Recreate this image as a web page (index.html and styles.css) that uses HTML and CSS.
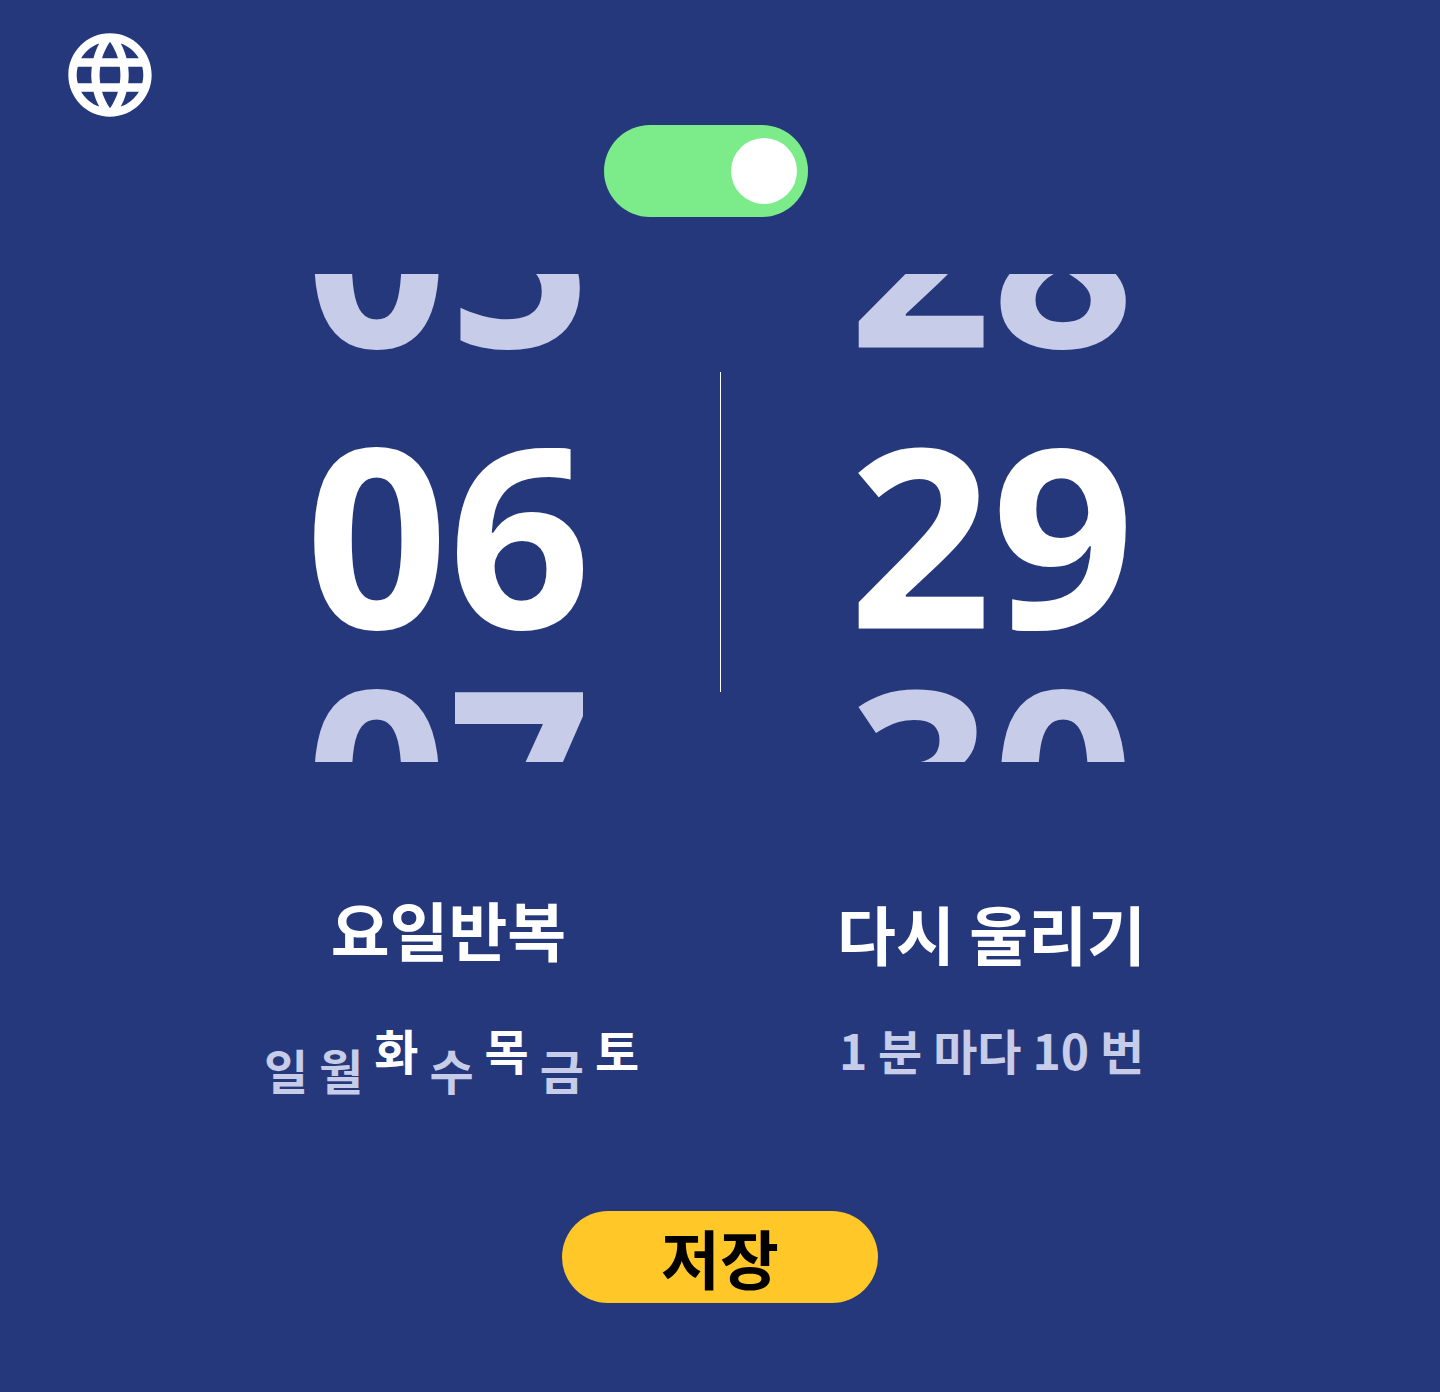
FILE: index.html
```html
<!DOCTYPE html>
<html lang="ko">
<head>
<meta charset="utf-8">
<meta name="viewport" content="width=device-width, initial-scale=1">
<title>알람</title>
<link rel="stylesheet" href="styles.css">
</head>
<body>
<form class="alarm">
  <header class="top">
    <button class="language" type="button" aria-label="언어">
      <svg class="globe" viewBox="0 0 24 24" aria-hidden="true"><path fill="currentColor" d="M11.99 2C6.47 2 2 6.48 2 12s4.47 10 9.99 10C17.52 22 22 17.52 22 12S17.52 2 11.99 2zm6.93 6h-2.95c-.32-1.25-.78-2.45-1.38-3.56 1.84.63 3.37 1.91 4.33 3.56zM12 4.04c.83 1.2 1.48 2.53 1.91 3.96h-3.82c.43-1.43 1.08-2.76 1.91-3.96zM4.26 14C4.1 13.36 4 12.69 4 12s.1-1.36.26-2h3.38c-.08.66-.14 1.32-.14 2 0 .68.06 1.34.14 2H4.26zm.82 2h2.95c.32 1.25.78 2.45 1.38 3.56-1.84-.63-3.37-1.9-4.33-3.56zm2.95-8H5.08c.96-1.66 2.49-2.93 4.33-3.56C8.81 5.55 8.35 6.75 8.03 8zM12 19.96c-.83-1.2-1.48-2.53-1.91-3.96h3.82c-.43 1.43-1.08 2.76-1.91 3.96zM14.34 14H9.66c-.09-.66-.16-1.32-.16-2 0-.68.07-1.35.16-2h4.68c.09.65.16 1.32.16 2 0 .68-.07 1.34-.16 2zm.25 5.56c.6-1.11 1.06-2.31 1.38-3.56h2.95c-.96 1.65-2.49 2.93-4.33 3.56zM16.36 14c.08-.66.14-1.32.14-2 0-.68-.06-1.34-.14-2h3.38c.16.64.26 1.31.26 2s-.1 1.36-.26 2h-3.38z"/></svg>
    </button>
    <input class="switch" type="checkbox" role="switch" aria-label="알람 켜기" checked>
  </header>

  <section class="picker">
    <div class="wheel">
      <ul class="numbers">
        <li class="number">05</li>
        <li class="number current">06</li>
        <li class="number">07</li>
      </ul>
    </div>
    <div class="divider"></div>
    <div class="wheel">
      <ul class="numbers">
        <li class="number">28</li>
        <li class="number current">29</li>
        <li class="number">30</li>
      </ul>
    </div>
  </section>

  <div class="options">
    <section class="option">
      <h2 class="title">요일반복</h2>
      <div class="days">
        <label class="day"><input class="day-box" type="checkbox">일</label>
        <label class="day"><input class="day-box" type="checkbox">월</label>
        <label class="day"><input class="day-box" type="checkbox" checked>화</label>
        <label class="day"><input class="day-box" type="checkbox">수</label>
        <label class="day"><input class="day-box" type="checkbox" checked>목</label>
        <label class="day"><input class="day-box" type="checkbox">금</label>
        <label class="day"><input class="day-box" type="checkbox" checked>토</label>
      </div>
    </section>
    <section class="option again">
      <h2 class="title">다시 울리기</h2>
      <p class="snooze">1 분 마다 10 번</p>
    </section>
  </div>

  <button class="save" type="button">저장</button>
</form>
</body>
</html>
```
FILE: styles.css
```css
* {
  box-sizing: border-box;
}

body {
  margin: 0;
  background: #25387b;
  color: #fff;
  font-family: "Noto Sans CJK JP", sans-serif;
  font-feature-settings: "locl" 0;
  font-weight: 700;
}

.alarm {
  display: flex;
  flex-direction: column;
  align-items: center;
  min-height: 100vh;
  padding: 25px 60px 88px;
}

.top {
  display: grid;
  grid-template-columns: 1fr auto 1fr;
  align-self: stretch;
}

.language {
  justify-self: start;
  align-self: start;
  padding: 0;
  border: 0;
  background: none;
  color: inherit;
  cursor: pointer;
}

.globe {
  display: block;
  width: 100px;
  height: 100px;
}

.switch {
  appearance: none;
  display: flex;
  align-items: center;
  width: 204px;
  height: 92px;
  margin: 100px 28px 0 0;
  padding: 0 11px;
  border-radius: 46px;
  background: #c7cce8;
  cursor: pointer;
}

.switch::before {
  content: "";
  width: 66px;
  height: 66px;
  border-radius: 50%;
  background: #fff;
}

.switch:checked {
  justify-content: flex-end;
  background: #7ceb8a;
}

.picker {
  display: flex;
  align-items: center;
  justify-content: center;
  width: 100%;
  max-width: 1086px;
  margin-top: 57px;
}

.wheel {
  flex: 1;
  height: 488px;
  overflow: hidden;
}

.numbers {
  margin: -144px 0 0;
  padding: 0;
  list-style: none;
  text-align: center;
  font-family: "Noto Sans", sans-serif;
  font-size: 250px;
  line-height: 242px;
}

.number {
  color: #c7cce8;
}

.current {
  margin-top: 39px;
  color: #fff;
}

.divider {
  width: 1px;
  height: 320px;
  margin-top: 28px;
  background: #fff;
}

.options {
  display: grid;
  grid-template-columns: 1fr 1fr;
  align-items: end;
  width: 100%;
  max-width: 1086px;
  margin-top: 118px;
}

.option {
  display: flex;
  flex-direction: column;
  align-items: center;
  gap: 41px;
}

.again {
  gap: 37px;
}

.title {
  margin: 0;
  font-size: 64px;
  line-height: 96px;
}

.days {
  display: flex;
  align-items: flex-end;
  gap: 11px;
  height: 84px;
  padding-left: 6px;
}

.day,
.snooze {
  margin: 0;
  color: #c7cce8;
  font-size: 48px;
  line-height: 64px;
}

.snooze {
  height: 84px;
}

.day {
  display: flex;
  cursor: pointer;
}

.day:has(:checked) {
  align-self: flex-start;
  color: #fff;
}

.day-box {
  appearance: none;
  width: 0;
  height: 0;
  margin: 0;
}

.save {
  width: 316px;
  height: 92px;
  margin-top: 110px;
  padding: 0 0 2px;
  border: 0;
  border-radius: 46px;
  background: #ffc727;
  color: #000;
  font: inherit;
  font-size: 64px;
  line-height: 90px;
  cursor: pointer;
}
```
